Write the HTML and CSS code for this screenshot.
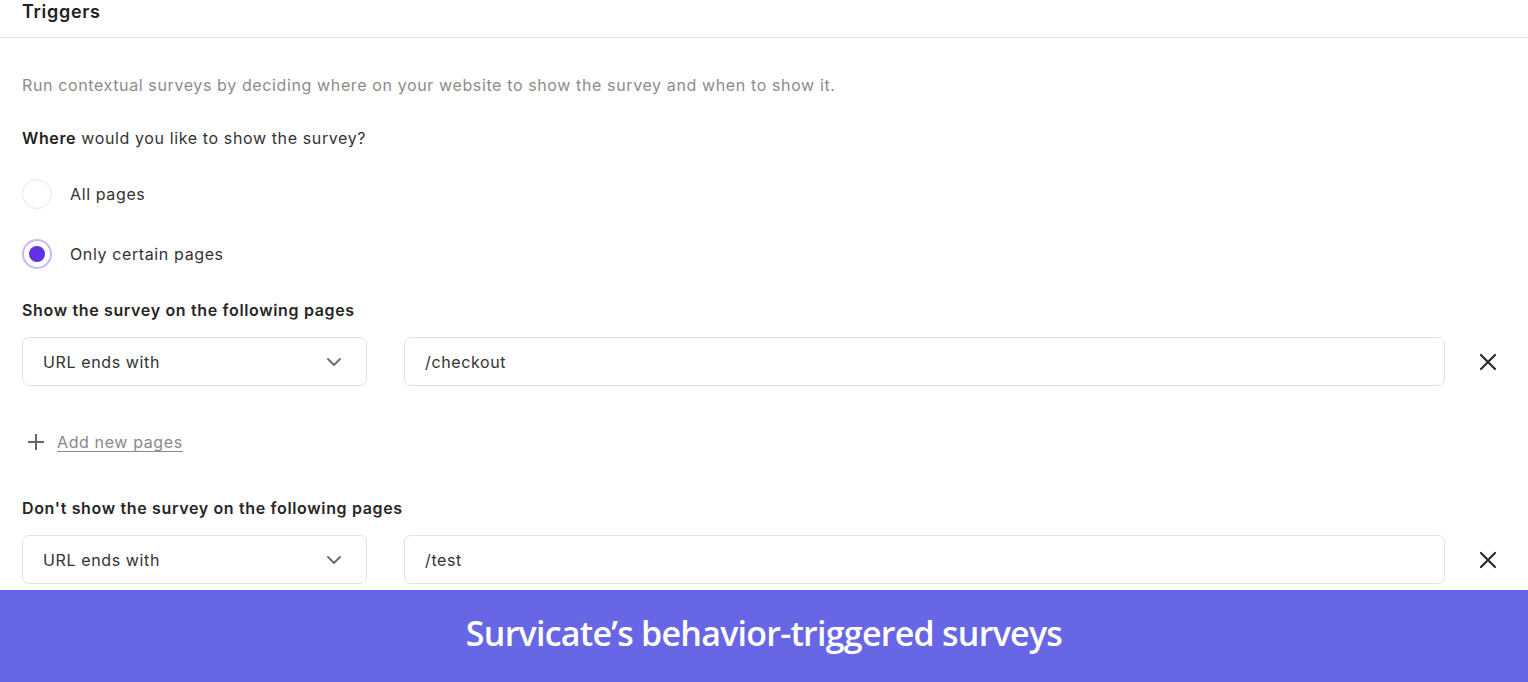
FILE: index.html
```html
<!DOCTYPE html>
<html lang="en">
<head>
<meta charset="utf-8">
<title>Triggers</title>
<link rel="stylesheet" href="styles.css">
</head>
<body>
<div class="page">
  <header class="head"><h1 class="title">Triggers</h1></header>
  <main class="content">
    <p class="desc">Run contextual surveys by deciding where on your website to show the survey and when to show it.</p>
    <p class="question"><strong>Where</strong> would you like to show the survey?</p>
    <div class="radios">
      <label class="radio"><span class="dot"></span><span>All pages</span></label>
      <label class="radio checked"><span class="dot"></span><span>Only certain pages</span></label>
    </div>
    <h2 class="label">Show the survey on the following pages</h2>
    <div class="row">
      <div class="select"><span>URL ends with</span>
        <svg class="chev" viewBox="0 0 14 8" width="14" height="8"><path d="M1 1l6 6 6-6" fill="none" stroke="#6b6b6b" stroke-width="1.8" stroke-linecap="round" stroke-linejoin="round"/></svg>
      </div>
      <div class="input">/checkout</div>
      <svg class="close" viewBox="0 0 20 20" width="20" height="20"><path d="M3 3l14 14M17 3L3 17" stroke="#2b2b2b" stroke-width="2.2" stroke-linecap="round"/></svg>
    </div>
    <div class="add">
      <svg class="plus" viewBox="0 0 18 18" width="18" height="18"><path d="M9 1v16M1 9h16" stroke="#666" stroke-width="2"/></svg>
      <a class="addlink" href="#">Add new pages</a>
    </div>
    <h2 class="label label2">Don't show the survey on the following pages</h2>
    <div class="row">
      <div class="select"><span>URL ends with</span>
        <svg class="chev" viewBox="0 0 14 8" width="14" height="8"><path d="M1 1l6 6 6-6" fill="none" stroke="#6b6b6b" stroke-width="1.8" stroke-linecap="round" stroke-linejoin="round"/></svg>
      </div>
      <div class="input">/test</div>
      <svg class="close" viewBox="0 0 20 20" width="20" height="20"><path d="M3 3l14 14M17 3L3 17" stroke="#2b2b2b" stroke-width="2.2" stroke-linecap="round"/></svg>
    </div>
  </main>
  <footer class="banner">Survicate’s behavior-triggered surveys</footer>
</div>
</body>
</html>
```

FILE: styles.css
```css
* { box-sizing: border-box; }
html, body { margin: 0; padding: 0; height: 100%; overflow: hidden; }
body {
  font-family: Inter, "Liberation Sans", sans-serif;
  color: #2f2f2f;
  background: #fff;
  font-size: 16px;
  letter-spacing: 0.62px;
}
.page { display: flex; flex-direction: column; height: 682px; }
.head {
  height: 38px;
  border-bottom: 1px solid #e2e2e2;
  padding: 0 22px;
}
.title {
  margin: 0;
  font-size: 18px;
  line-height: 24px;
  font-weight: 600;
  color: #222;
  letter-spacing: 0.7px;
}
.content {
  flex: 1;
  padding: 0 30px 0 22px;
  display: flex;
  flex-direction: column;
}
.desc {
  margin: 35px 0 0;
  line-height: 24px;
  color: #8c8c8c;
}
.question {
  margin: 29px 0 0;
  line-height: 24px;
  color: #333;
}
.question strong { font-weight: 600; color: #222; }
.radios {
  margin-top: 29px;
  display: flex;
  flex-direction: column;
  gap: 30px;
}
.radio {
  display: flex;
  align-items: center;
  gap: 18px;
  height: 30px;
  color: #333;
}
.dot {
  width: 30px;
  height: 30px;
  border-radius: 50%;
  border: 1.5px solid #e6e6e6;
  display: flex;
  align-items: center;
  justify-content: center;
}
.checked .dot { border: 2px solid #c6b8fa; }
.checked .dot::after {
  content: "";
  width: 16px;
  height: 16px;
  border-radius: 50%;
  background: #6230e8;
}
.label {
  margin: 29px 0 0;
  font-size: 16px;
  line-height: 24px;
  font-weight: 600;
  color: #262626;
  letter-spacing: 0.65px;
}
.label2 { margin-top: 42px; }
.row {
  margin-top: 15px;
  display: flex;
  align-items: center;
  gap: 37px;
}
.select, .input {
  height: 49px;
  border: 1px solid #e3e3e3;
  border-radius: 7px;
  display: flex;
  align-items: center;
  color: #333;
}
.select {
  width: 345px;
  padding: 0 25px 0 20px;
  justify-content: space-between;
}
.input {
  flex: 1;
  padding: 0 20px;
}
.close { margin-left: -4px; flex: none; }
.add {
  margin-top: 44px;
  display: flex;
  align-items: center;
  gap: 12px;
  height: 24px;
  padding-left: 5px;
}
.addlink {
  color: #8a8a8a;
  text-decoration: underline;
  text-underline-offset: 3px;
  line-height: 24px;
}
.banner {
  height: 92px;
  padding-bottom: 6px;
  background: #6766e5;
  color: #fff;
  display: flex;
  align-items: center;
  justify-content: center;
  font-family: "Open Sans", "Liberation Sans", sans-serif;
  font-weight: 600;
  font-size: 34px;
  letter-spacing: -0.75px;
}
```
